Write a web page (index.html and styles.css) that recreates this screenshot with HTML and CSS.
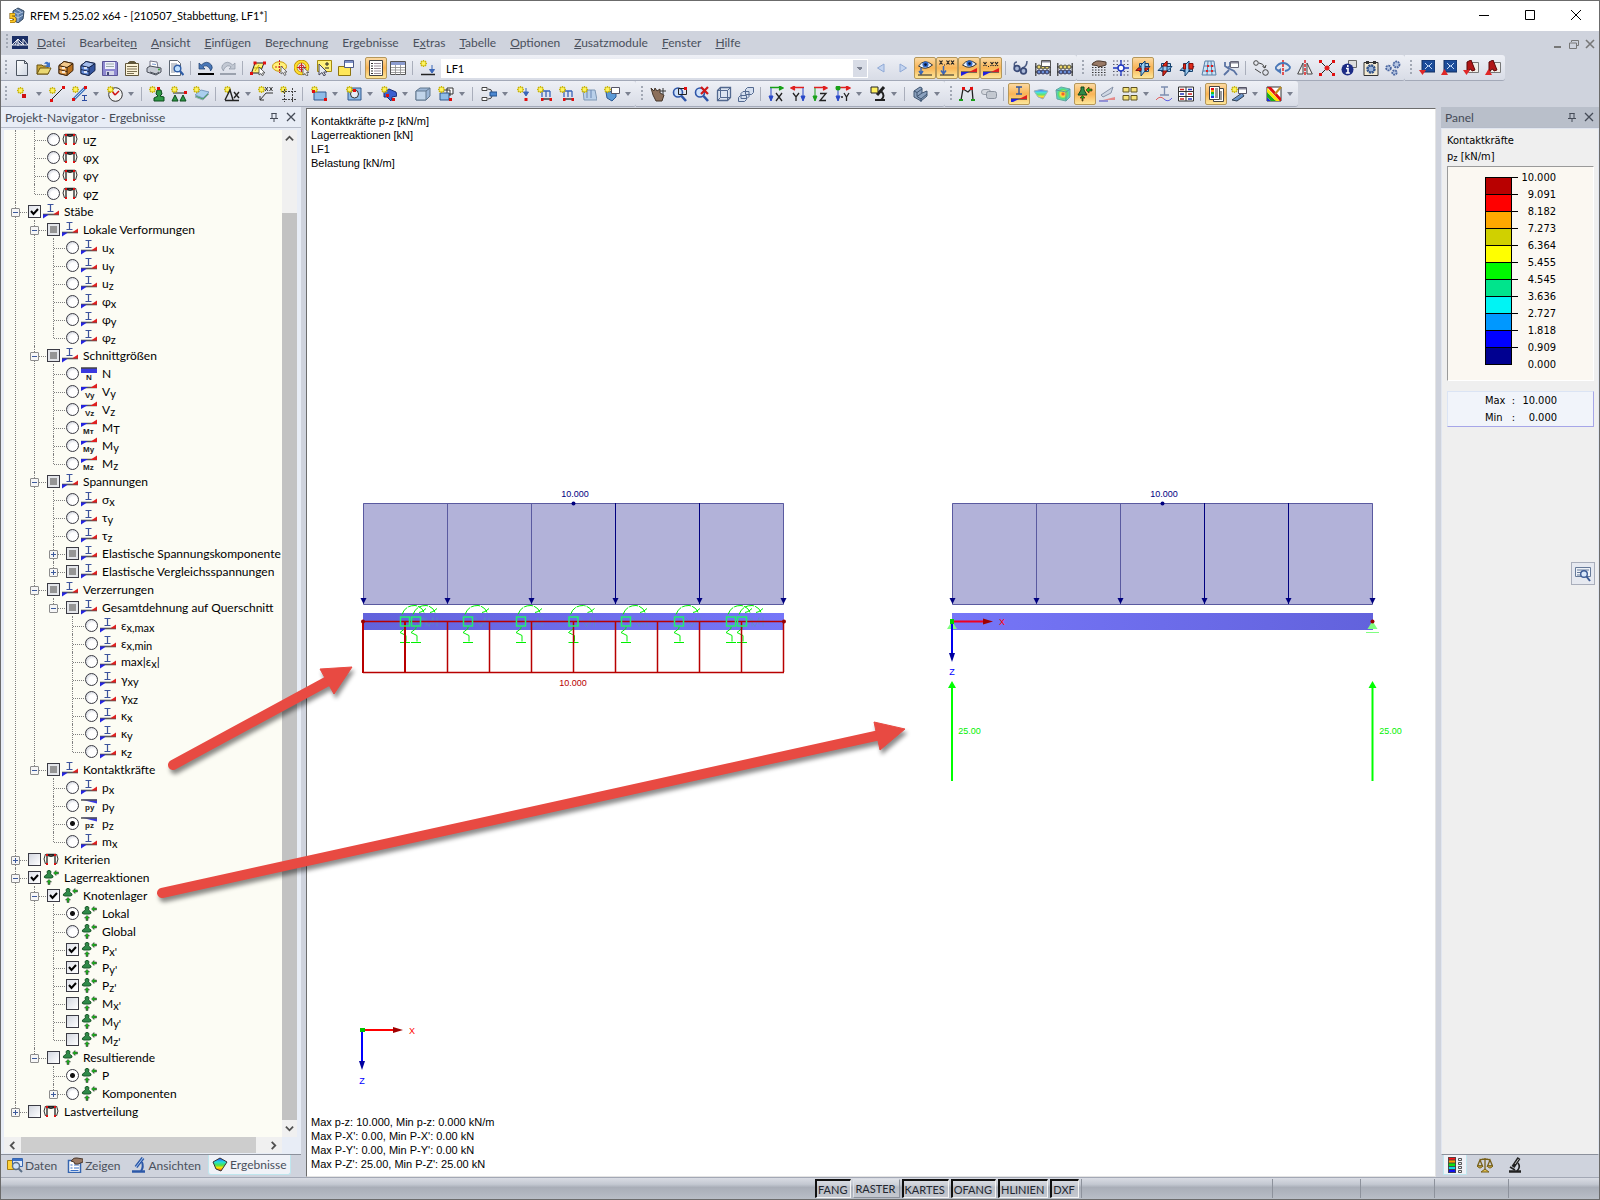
FILE: index.html
```html
<!DOCTYPE html>
<html lang="de">
<head>
    <meta charset="UTF-8">
    <meta name="viewport" content="width=device-width, initial-scale=1.0">
    <title>RFEM 5.25.02 x64 - [210507_Stabbettung, LF1*]</title>
    <link rel="stylesheet" href="styles.css">
</head>
<body>
    <!-- icon sprite -->
    <svg class="sprite" aria-hidden="true">
        <defs>
            <linearGradient id="g-blue" x1="0" y1="0" x2="1" y2="1"><stop offset="0" stop-color="#b5d4f4"/><stop offset="1" stop-color="#2d5fa8"/></linearGradient>
            <linearGradient id="g-paper" x1="0" y1="0" x2="1" y2="1"><stop offset="0" stop-color="#ffffff"/><stop offset="1" stop-color="#cfd6e2"/></linearGradient>
            <linearGradient id="g-rain" x1="0" y1="0" x2="0" y2="1"><stop offset="0" stop-color="#2a3cff"/><stop offset=".3" stop-color="#20e0e0"/><stop offset=".55" stop-color="#4be04b"/><stop offset=".75" stop-color="#ffe600"/><stop offset="1" stop-color="#f03010"/></linearGradient>
            <radialGradient id="g-cube"><stop offset="0" stop-color="#f03020"/><stop offset=".35" stop-color="#ffe040"/><stop offset=".65" stop-color="#58e070"/><stop offset="1" stop-color="#58c8e8"/></radialGradient>
            <linearGradient id="g-beam" x1="0" x2="1"><stop offset="0" stop-color="#7676f8"/><stop offset="1" stop-color="#6262dc"/></linearGradient>
            <linearGradient id="g-beam2" x1="0" x2="1"><stop offset="0" stop-color="#6262dc"/><stop offset="1" stop-color="#7676f8"/></linearGradient>
        </defs>
        <g id="star"><path d="M3.500 0v7M0 3.500h7M1 1l5 5M6 1l-5 5" stroke="#c9b400" stroke-width="1.400"/><circle cx="3.500" cy="3.500" r="1.900" fill="#fff45a"/></g>
        <g id="dot"><rect width="3" height="3" fill="#e01010"/></g>
        <g id="load"><path d="M1 1v6M5 1v6M9 1v6M1 1h8" stroke="#3a66b8" fill="none" stroke-width="1.300"/><path d="M0 9h11" stroke="#222" stroke-width="1.300"/><rect x="0" y="8" width="2.500" height="3" fill="#e01010"/><rect x="8.500" y="8" width="2.500" height="3" fill="#e01010"/></g>

        <symbol id="i-app" viewBox="0 0 16 16"><path d="M4 4l5-3 6 3-1 8-5 4-5-3z" fill="#5b7ba6" stroke="#33475f"/><path d="M5 5l4 2 5-2M9 7v8M7 2l5 3M6 9l3 2 5-3" stroke="#c4d6ec" fill="none" stroke-width=".8"/><path d="M6 7.500H2v3h2q2 0 2 2t-2 2H1" stroke="#7a5400" stroke-width="3" fill="none"/><path d="M6 7.500H2v3h2q2 0 2 2t-2 2H1" stroke="#ffc928" stroke-width="1.800" fill="none"/></symbol>
        <symbol id="i-bridge" viewBox="0 0 16 13"><path d="M0 0h16v13H0z" fill="#1b2f66"/><path d="M0 9h16M6 3v7M6 3L0 9M6 3L3 9M6 3l6 6M11 3v6M11 3l5 6M6 6.500l4 2.500" stroke="#fff" fill="none" stroke-width=".9"/></symbol>
        <symbol id="i-new" viewBox="0 0 16 16"><path d="M2.500.5h8l3 3v12h-11z" fill="url(#g-paper)" stroke="#4d5561"/><path d="M10.500.5v3h3" fill="none" stroke="#4d5561"/></symbol>
        <symbol id="i-open" viewBox="0 0 16 16"><path d="M1 14V5h5l1 1h5v8z" fill="#c9a63a" stroke="#6a5310"/><path d="M1 14l3-6h11l-3 6z" fill="#ead873" stroke="#6a5310"/><path d="M8 4q2-4 5-1l1-1v5H9l2-2q-1-2-3-1z" fill="#3f74c7"/></symbol>
        <symbol id="i-cab" viewBox="0 0 16 16"><path d="M1 5.500l5-4 9 2v7l-6 5-8-2z" fill="#b9711f" stroke="#40240a"/><path d="M1 5.500l8 2v8l-8-2z" fill="#eba95a" stroke="#40240a"/><path d="M9 7.500l6-4M1 9.500l8 2" stroke="#40240a"/><path d="M1 5.500l5-4 9 2-6 4z" fill="#f3c98c" stroke="#40240a"/><path d="M4 8h3M4 12h3" stroke="#fff" stroke-width="1.500"/></symbol>
        <symbol id="i-cabblue" viewBox="0 0 16 16"><path d="M1 5.500l5-4 9 2v7l-6 5-8-2z" fill="#34549e" stroke="#16264d"/><path d="M1 5.500l8 2v8l-8-2z" fill="#6a91dc" stroke="#16264d"/><path d="M9 7.500l6-4M1 9.500l8 2" stroke="#16264d"/><path d="M1 5.500l5-4 9 2-6 4z" fill="#a4bdec" stroke="#16264d"/><path d="M4 8h3M4 12h3" stroke="#fff" stroke-width="1.500"/></symbol>
        <symbol id="i-save" viewBox="0 0 16 16"><path d="M.5 1.500h14l1 1v13H.5z" fill="#8d88d0" stroke="#5a5596"/><path d="M3 2h10v7H3z" fill="#eef0fa"/><path d="M4 4h8M4 6.500h8" stroke="#9aa"/><path d="M4 11h8v4H4z" fill="#d4d6e8"/><path d="M5 12h2v3H5z" fill="#444b78"/></symbol>
        <symbol id="i-list" viewBox="0 0 16 16"><path d="M1.500 3.500h3l1-2h5l1 2h3v12h-13z" fill="#fbf3d9" stroke="#60563a"/><path d="M3 6.500h10M3 9h10M3 11.500h10M3 13.500h7" stroke="#7a6f50"/><path d="M4 3h8" stroke="#60563a" stroke-width="2"/></symbol>
        <symbol id="i-print" viewBox="0 0 16 16"><path d="M4 1l7 1 1 6-8-1z" fill="#fff" stroke="#778"/><path d="M1 8l3-2 11 2v4l-5 3-9-3z" fill="#c7cbd4" stroke="#4a4f5a"/><path d="M4 12l6 2 3-2" stroke="#4a4f5a" fill="none"/><path d="M6 4l4 .5" stroke="#7a9ad0"/><circle cx="13" cy="9.500" r="1" fill="#37a437"/></symbol>
        <symbol id="i-preview" viewBox="0 0 16 16"><path d="M1.500.5h8l3 3v12h-11z" fill="#fff" stroke="#5d6672"/><path d="M3 4h6M3 6h4M3 8h3M3 10h3M3 12h4" stroke="#8a93a0"/><circle cx="9.500" cy="8.500" r="3.300" fill="#bfe0ff" stroke="#2f5da6" stroke-width="1.400"/><path d="M12 11l3.500 4" stroke="#2f5da6" stroke-width="2.200"/></symbol>
        <symbol id="i-undo" viewBox="0 0 16 16"><path d="M1 3v6h6L4.800 6.800Q9 4 12 9q.5 1 .5 2 3-3 1-6Q9-.5 3.200 5z" fill="#4a78b8" stroke="#1d3c6b" stroke-width=".7"/><path d="M0 14h16" stroke="#000" stroke-width="2"/></symbol>
        <symbol id="i-redo" viewBox="0 0 16 16"><path d="M15 3v6H9l2.200-2.200Q7 4 4 9q-.5 1-.5 2-3-3-1-6Q7-.5 12.800 5z" fill="#c3c9d4" stroke="#8d95a3" stroke-width=".7"/><path d="M0 14h16" stroke="#9aa1ad" stroke-width="2"/></symbol>
        <symbol id="i-plane" viewBox="0 0 16 16"><path d="M5 3h9l-4 10H1.500z" fill="#fff27a" stroke="#222"/><path d="M4 8l8-.5M9 5L5 11" stroke="#c9b400"/><use href="#dot" x="3.500" y="1.500"/><use href="#dot" x="13" y="1.500"/><use href="#dot" x="0" y="12"/><path d="M9 7v8l2-1.500 1 2 1.500-.6-1-2H15z" fill="#fff" stroke="#444" stroke-width=".8"/></symbol>
        <symbol id="i-lasso" viewBox="0 0 16 16"><ellipse cx="7.500" cy="6.500" rx="7" ry="4.800" fill="#fff27a" stroke="#c9960a"/><path d="M7.500 0v13M3 7h9" stroke="#d02020" stroke-dasharray="2 1"/><path d="M9 6v8l2-1.500 1.500 3 1.500-.8-1.400-2.700H15z" fill="#eee" stroke="#555" stroke-width=".8"/></symbol>
        <symbol id="i-ring" viewBox="0 0 16 16"><circle cx="7.500" cy="7.500" r="6" fill="none" stroke="#b98b00" stroke-width="3.600"/><circle cx="7.500" cy="7.500" r="6" fill="none" stroke="#ffdf30" stroke-width="2.200"/><circle cx="7.500" cy="7.500" r="2.500" fill="none" stroke="#d02020"/><path d="M7.500 3v9M3 7.500h9" stroke="#d02020"/><path d="M9 7v8l2-1.500 1.500 2.500 1.500-.8-1.400-2.700H15z" fill="#eee" stroke="#555" stroke-width=".8"/></symbol>
        <symbol id="i-selpm" viewBox="0 0 16 16"><path d="M1.500.5h14v11h-14z" fill="#fff27a" stroke="#a58a10"/><path d="M9 4h4M11 2v4M9 8h4" stroke="#222"/><path d="M3 4v11l3-2.500 2 3.500 1.500-1-1.800-3H11z" fill="#e6ebf2" stroke="#445"/></symbol>
        <symbol id="i-group" viewBox="0 0 16 16"><path d="M.5 6.500h12v9H.5z" fill="#ffe75a" stroke="#8e7510"/><path d="M6.500.5h9v7h-9z" fill="#fff" stroke="#4e5b88"/><path d="M7 1h8v2H7z" fill="#7f92c8"/></symbol>
        <symbol id="i-sheet" viewBox="0 0 16 16"><path d="M1.500.5h13v15h-13z" fill="#fff" stroke="#444"/><path d="M3 3.500h2M3 6h2M3 8.500h2M3 11h2M3 13.500h2" stroke="#333"/><path d="M6 3.500h7M6 6h7M6 8.500h7M6 11h7M6 13.500h7" stroke="#9a8f9a"/></symbol>
        <symbol id="i-table" viewBox="0 0 16 16"><path d="M.5 1.500h15v13H.5z" fill="#fff" stroke="#555"/><path d="M1 2h14v3H1z" fill="#8c9ccf"/><path d="M1 7.500h14M1 10h14M1 12.500h14M5.500 5v10M10.500 5v10" stroke="#888" stroke-width=".8"/></symbol>
        <symbol id="i-newlf" viewBox="0 0 16 16"><use href="#star"/><path d="M12 5v7M9.500 9.500L12 13l2.500-3.500z" stroke="#3a66b8" fill="#3a66b8"/><path d="M1 14.500h14" stroke="#222" stroke-width="1.500"/></symbol>
        <symbol id="i-prev" viewBox="0 0 16 16"><path d="M11 4v8L4.500 8z" fill="#c5d5f0" stroke="#8fa9d6"/></symbol>
        <symbol id="i-next" viewBox="0 0 16 16"><path d="M5 4v8l6.500-4z" fill="#c5d5f0" stroke="#8fa9d6"/></symbol>
        <g id="eye"><path d="M0 5Q6-3 14 4 7 10 0 5z" fill="#e9f2ff" stroke="#333"/><circle cx="7" cy="3.600" r="3" fill="#2f66c8"/><circle cx="7" cy="3.600" r="1.300" fill="#0b1530"/></g>
        <g id="xxx"><path d="M0 0l3 4M3 0L0 4M4.500 4.500h1M7 0l3 4M10 0L7 4M11.500 0l3 4M14.500 0l-3 4" stroke="#222" fill="none" stroke-width="1.200"/></g>
        <symbol id="i-eyeload" viewBox="0 0 16 16"><use href="#eye" x="1.500" y="1"/><path d="M4 8v6M2 11l2 3 2-3" stroke="#3a66b8" stroke-width="1.500" fill="none"/><path d="M1 15h14" stroke="#222"/></symbol>
        <symbol id="i-xxload" viewBox="0 0 16 16"><use href="#xxx" x=".5" y=".5"/><path d="M4.500 6v8M2 10.500L4.500 14 7 10.500" stroke="#3a66b8" stroke-width="1.500" fill="none"/><path d="M1 15h14" stroke="#222"/></symbol>
        <g id="wedge"><path d="M0 3h16" stroke="#444" stroke-width="1.400"/><path d="M0 3h8L0 7z" fill="#2020e0"/><path d="M16 3H8l8-4z" fill="#e02020"/></g>
        <symbol id="i-eyeres" viewBox="0 0 16 16"><use href="#eye" x="1.500" y="0"/><use href="#wedge" y="9"/></symbol>
        <symbol id="i-xxres" viewBox="0 0 16 16"><use href="#xxx" x=".5" y="2"/><use href="#wedge" y="9"/></symbol>
        <symbol id="i-glasses" viewBox="0 0 16 16"><path d="M2 8Q0 2 4 2M9 8q5-1 5-7" fill="none" stroke="#4a5a82" stroke-width="1.500"/><circle cx="4" cy="8.500" r="2.800" fill="#a9b8d8" stroke="#3c4c78" stroke-width="1.800"/><circle cx="10.500" cy="11" r="2.800" fill="#a9b8d8" stroke="#3c4c78" stroke-width="1.800"/></symbol>
        <symbol id="i-abacus" viewBox="0 0 16 16"><path d="M.8 3v13M15.200 3v13M0 7h16M0 12h16" stroke="#333" stroke-width="1.200"/><circle cx="4" cy="7" r="2" fill="#e9d36a" stroke="#554"/><circle cx="8" cy="7" r="2" fill="#e9d36a" stroke="#554"/><circle cx="12" cy="7" r="2" fill="#e9d36a" stroke="#554"/><circle cx="4" cy="12" r="2" fill="#6b8fd8" stroke="#335"/><circle cx="8" cy="12" r="2" fill="#6b8fd8" stroke="#335"/><circle cx="12" cy="12" r="2" fill="#6b8fd8" stroke="#335"/></symbol>
        <symbol id="i-abacus2" viewBox="0 0 16 16"><use href="#i-abacus"/><path d="M6.500.5h9v6h-9z" fill="#fff" stroke="#555"/><path d="M7 1h8v1.500H7z" fill="#889"/></symbol>
        <symbol id="i-gridhand" viewBox="0 0 16 16"><path d="M1 7.500h15M1 10h15M1 12.500h15M1 15h15" stroke="#333" stroke-dasharray="1.500 1.500"/><path d="M2 3Q6 0 9 1l6 1v3l-5 1.500q-3 1-4-1L1 5z" fill="#9a7a66" stroke="#4a382c"/></symbol>
        <symbol id="i-gridsnap" viewBox="0 0 16 16"><path d="M0 1h16M0 4.500h16M0 11.500h16M0 15h16" stroke="#556" stroke-dasharray="1.500 2"/><circle cx="8" cy="8" r="3" fill="#fff" stroke="#2038c0" stroke-width="1.500"/><path d="M8 0v5M8 11v5M0 8h5M11 8h5" stroke="#2038c0" stroke-width="1.300"/></symbol>
        <g id="planes"><path d="M4.500 3.500h9v8h-9z" fill="#a8d2f4" stroke="#14406e"/><path d="M1 10.500l4-4h10l-4 4z" fill="#7ab4e6" stroke="#14406e"/><path d="M6 5l4-4v10l-4 5z" fill="#9accf2" stroke="#14406e"/></g>
        <symbol id="i-wp1" viewBox="0 0 16 16"><use href="#planes"/><path d="M1 10.500l2.500-2.500H6v2.500zM10 8h4l-2.500 2.500H10z" fill="#e02a1a" stroke="#8b0f08"/></symbol>
        <symbol id="i-wp2" viewBox="0 0 16 16"><use href="#planes"/><path d="M6 5l4-4v5H6zM6 11h4l-4 5z" fill="#e02a1a" stroke="#8b0f08"/></symbol>
        <symbol id="i-wp3" viewBox="0 0 16 16"><use href="#planes"/><path d="M10 3.500h4V9h-4zM4.500 4h2v5h-2z" fill="#e02a1a" stroke="#8b0f08"/></symbol>
        <symbol id="i-mesh" viewBox="0 0 16 16"><path d="M4 1h9l2 14H1z" fill="#cfe4f5" stroke="#5980a8"/><path d="M3 6h11M2 11h12M7 1L6 15M10 1l1 14" stroke="#5980a8"/><path d="M6 5h2v2H6zM10 5h2v2h-2zM5 10h2v2H5zM10 10h2v2h-2z" fill="#e02020"/></symbol>
        <symbol id="i-wrench" viewBox="0 0 16 16"><path d="M1 15l5-5M2 2v4l3 2 2-2V2M5 8l6 3 3 4" stroke="#5a73a3" stroke-width="1.800" fill="none"/><path d="M7.500 1.500h8v6h-8z" fill="#fff" stroke="#667"/><path d="M8 2h7v1.500H8z" fill="#889"/></symbol>
        <symbol id="i-move" viewBox="0 0 16 16"><circle cx="3" cy="3" r="2.300" fill="none" stroke="#444"/><circle cx="12.500" cy="12.500" r="2.800" fill="none" stroke="#444"/><path d="M6 3q4 0 6 5M9.500 6.500L12 8l1-3M2 9l6 4" stroke="#444" fill="none"/></symbol>
        <symbol id="i-rotate" viewBox="0 0 16 16"><path d="M8 0v16" stroke="#e02020" stroke-width="1.500" stroke-dasharray="3 1"/><path d="M5 11Q0 10 1 7q3-4 7-4t7 4q0 3-5 4" fill="none" stroke="#4a78b8" stroke-width="1.800"/><path d="M6 8v6l-4-3z" fill="#4a78b8"/></symbol>
        <symbol id="i-mirror" viewBox="0 0 16 16"><path d="M8 0v16" stroke="#e02020" stroke-width="1.500" stroke-dasharray="3 1"/><path d="M6 3v11H.7zM10 3v11h5.300z" fill="#eee" stroke="#444"/></symbol>
        <symbol id="i-cross" viewBox="0 0 16 16"><path d="M2 2l12 12M14 2L2 14" stroke="#222"/><circle cx="8" cy="8" r="2.500" fill="#e02020"/><use href="#dot" x="0" y="0"/><use href="#dot" x="13" y="0"/><use href="#dot" x="0" y="13"/><use href="#dot" x="13" y="13"/></symbol>
        <symbol id="i-info" viewBox="0 0 16 16"><path d="M7.500.5h8v7h-8z" fill="#ddd" stroke="#666"/><circle cx="6.500" cy="9.500" r="6" fill="#1c2c86"/><path d="M6.800 5v2M5 8.500h2v4M4.800 13h4" stroke="#fff" stroke-width="1.600" fill="none"/></symbol>
        <symbol id="i-calc" viewBox="0 0 16 16"><path d="M1 2.500h14v13H1z" fill="#f3ead2" stroke="#333"/><path d="M3 2.500h3M10 2.500h3" stroke="#333" stroke-width="3"/><circle cx="8" cy="9" r="3.500" fill="none" stroke="#33558c" stroke-width="2.500" stroke-dasharray="2 .7"/><circle cx="8" cy="9" r="3" fill="#9bb4da" stroke="#33558c"/></symbol>
        <symbol id="i-gears" viewBox="0 0 16 16"><g fill="#b8c8e4" stroke="#4a66a0" stroke-width="1.800" stroke-dasharray="1.800 .7"><circle cx="3.500" cy="8" r="2.400"/><circle cx="11.500" cy="4.500" r="3"/><circle cx="9.500" cy="12.500" r="2.200"/></g></symbol>
        <g id="mod"><path d="M3 0h13v12H3z" fill="#1b4c9a" stroke="#122f60"/><path d="M6 3l3 3-3 3M13 3l-3 3 3 3M8 6h3" stroke="#d5e8ff" fill="none" stroke-width=".9"/></g>
        <symbol id="i-mod1" viewBox="0 0 16 16"><use href="#mod"/><path d="M0 10h7l-3.500 5z" fill="#e02828"/></symbol>
        <symbol id="i-mod2" viewBox="0 0 16 16"><use href="#mod"/><path d="M0 15h7l-3.500-6z" fill="#e02828"/></symbol>
        <g id="acad"><path d="M5.500 2.500h10v10h-10z" fill="#f1eee8" stroke="#777"/><path d="M4 12V2l4-2 4 10-3 1-1-2-2 1z" fill="#b01616" stroke="#5b0808"/></g>
        <symbol id="i-acad1" viewBox="0 0 16 16"><use href="#acad"/><path d="M0 10h7l-3.500 5z" fill="#e02828"/></symbol>
        <symbol id="i-acad2" viewBox="0 0 16 16"><use href="#acad"/><path d="M0 15h7l-3.500-6z" fill="#e02828"/></symbol>

        <symbol id="i-node" viewBox="0 0 16 16"><use href="#star" x="2" y="1"/><path d="M7 8h4v4H7z" fill="#d01010"/></symbol>
        <symbol id="i-line" viewBox="0 0 16 16"><path d="M2 14L14 2" stroke="#222"/><use href="#star" y="1"/><use href="#dot" x="13" y="0"/><use href="#dot" x="1" y="13"/></symbol>
        <symbol id="i-member" viewBox="0 0 16 16"><path d="M2 13L13 2" stroke="#3d72bb" stroke-width="3"/><path d="M2 13L13 2" stroke="#b5d4f4"/><use href="#star"/><use href="#dot" x="12" y="0"/><use href="#dot" x="0" y="12"/><path d="M10 9.500h5M12.500 9.500v5M10 14.500h5" stroke="#2a4aa0"/></symbol>
        <symbol id="i-clock" viewBox="0 0 16 16"><circle cx="8.500" cy="8.500" r="6.800" fill="#f2f2f2" stroke="#333"/><path d="M8 9l4-4M8 9L5 5" stroke="#d01010" stroke-width="1.500"/><use href="#star"/></symbol>
        <symbol id="i-supp" viewBox="0 0 16 16"><path d="M8 4h4l1 4-2 2 4 1v4H5v-3l4-2-2-2z" fill="#2f9a45" stroke="#0d4a1c"/><use href="#star"/><use href="#dot" x="8" y="1"/></symbol>
        <symbol id="i-lsupp" viewBox="0 0 16 16"><path d="M2 7h13" stroke="#222"/><path d="M4 9l3 6H1zM12 9l3 6H9z" fill="#2f9a45" stroke="#0d4a1c"/><use href="#star"/><use href="#dot" x="13" y="5"/></symbol>
        <symbol id="i-ssupp" viewBox="0 0 16 16"><path d="M2 11l6-5 8 2-6 6z" fill="#4aa860" stroke="#9ab"/><path d="M2 9l6-5 8 2-6 6z" fill="#a9cfee" stroke="#7a9cc0"/><use href="#star"/></symbol>
        <symbol id="i-dim" viewBox="0 0 16 16"><use href="#star"/><path d="M1 14L6 4l3 10M1 14.500h14M10 6l5 6M15 6l-5 6" stroke="#222" stroke-width="1.400" fill="none"/></symbol>
        <symbol id="i-comment" viewBox="0 0 16 16"><use href="#star"/><path d="M7 1l3 4M10 1L7 5M11.500 1l3 4M14.500 1l-3 4M15 7H8l-6 7M2 10v4h4" stroke="#333" fill="none"/></symbol>
        <symbol id="i-guide" viewBox="0 0 16 16"><use href="#star"/><path d="M4.500 3v13M12.500 2v14M2 5.500h14M2 13.500h14" stroke="#444" stroke-dasharray="2 1"/></symbol>
        <symbol id="i-surf" viewBox="0 0 16 16"><path d="M3 6h12v8H3z" fill="#8fbce8" stroke="#33588c"/><use href="#star"/><use href="#dot" x="1" y="4"/><use href="#dot" x="13" y="12"/></symbol>
        <symbol id="i-hole" viewBox="0 0 16 16"><path d="M2 2h13v12H2z" fill="#8fbce8" stroke="#33588c"/><circle cx="8.500" cy="8" r="4" fill="#e9edf5" stroke="#333"/><use href="#star"/><use href="#dot" x="7" y="3"/></symbol>
        <symbol id="i-solid" viewBox="0 0 16 16"><path d="M3 6l5-3 7 3 1 4-5 1-1 4-4-4H3z" fill="#3b5fd0" stroke="#182e78"/><use href="#star"/><use href="#dot" x="5" y="8"/><use href="#dot" x="11" y="12"/></symbol>
        <symbol id="i-box" viewBox="0 0 16 16"><path d="M1 5l4-3h10v8l-4 4H1z" fill="#9cb6d6" stroke="#62788f"/><path d="M1 5h10v9H1z" fill="#c2d5ea" stroke="#62788f"/><path d="M11 5l4-3" stroke="#62788f"/></symbol>
        <symbol id="i-copybox" viewBox="0 0 16 16"><path d="M9 2h6v6H9z" fill="#fff" stroke="#333"/><path d="M2 7h9v7H2z" fill="#8fbce8" stroke="#33588c"/><path d="M6 4h6v6" fill="none" stroke="#333"/><use href="#star"/><use href="#dot" x="11" y="12"/></symbol>
        <symbol id="i-combo" viewBox="0 0 16 16"><path d="M1 1.500h5v3H1zM1 11.500h5v3H1z" fill="#fff" stroke="#444"/><path d="M7 3q4 0 4 3M7 13q4 0 4-3" fill="none" stroke="#444"/><path d="M9 6h7v4H9z" fill="#4c88d0" stroke="#23508c"/></symbol>
        <symbol id="i-nload" viewBox="0 0 16 16"><use href="#star" x="2"/><path d="M11 2v7M8.500 6l2.500 4 2.500-4z" stroke="#3a66b8" fill="#3a66b8"/><use href="#dot" x="9.500" y="12"/></symbol>
        <symbol id="i-mload" viewBox="0 0 16 16"><use href="#load" x="4" y="4"/><use href="#star"/></symbol>
        <symbol id="i-sload" viewBox="0 0 16 16"><path d="M2 4h12l2 10H3z" fill="#b9d0ea" stroke="#7f98b5"/><path d="M6 4v8M10 4v8" stroke="#6b87b3"/><use href="#star"/></symbol>
        <symbol id="i-gload" viewBox="0 0 16 16"><path d="M2 6l10-1v6l-4 4-5-3z" fill="#5c9ad6" stroke="#2d5a94"/><path d="M7.500 1.500h8v6h-8z" fill="#fff" stroke="#556"/><use href="#star"/></symbol>
        <symbol id="i-hand" viewBox="0 0 16 16"><path d="M1 2l3 3 1-3 2 3 3-2v4l4 2-2 6H6L3 9z" fill="#8c6f5a" stroke="#44362b"/><path d="M10 5h6M13 2v6" stroke="#333"/></symbol>
        <symbol id="i-zoomwin" viewBox="0 0 16 16"><circle cx="6" cy="6.500" r="4.500" fill="#cfe2fa" stroke="#2e55a8" stroke-width="1.600"/><path d="M9.500 10l4.500 5" stroke="#2e55a8" stroke-width="2.600"/><path d="M6.500 2.500h8v6h-8z" fill="none" stroke="#222"/><use href="#dot" x="12" y="1"/></symbol>
        <symbol id="i-zoomx" viewBox="0 0 16 16"><circle cx="6" cy="6.500" r="4.500" fill="#cfe2fa" stroke="#2e55a8" stroke-width="1.600"/><path d="M9.500 10l4.500 5" stroke="#2e55a8" stroke-width="2.600"/><path d="M7 1l7 7M14 1L7 8" stroke="#d01818" stroke-width="2.200"/></symbol>
        <symbol id="i-cube" viewBox="0 0 16 16"><path d="M1.500 4.500l3-3h10v10l-3 3h-10z" fill="#dce4f1" stroke="#53698f" stroke-width="1.300"/><path d="M1.500 4.500h10v10M11.500 4.500l3-3M4.500 1.500v10h10M4.500 11.500l-3 3" stroke="#53698f" fill="none"/></symbol>
        <symbol id="i-cubes" viewBox="0 0 16 16"><path d="M9.500 1.500h6v5l-2 2h-6v-5zM5 5.500h6v5l-2 2H3v-5zM2.500 9.500h6v4l-2 2h-6v-4z" fill="#d5dfef" stroke="#53698f"/></symbol>
        <symbol id="i-vx" viewBox="0 0 16 16"><path d="M2 1.500h10M11 0l4 2-4 2" stroke="#18a018" fill="#18a018" stroke-width="1.500"/><path d="M3 2v10M1 10l2 5 2-5z" stroke="#2848c8" fill="#2848c8"/><path d="M8 7l6 8M14 7l-6 8" stroke="#222" stroke-width="1.300"/></symbol>
        <symbol id="i-vy" viewBox="0 0 16 16"><path d="M14 1.500H3M5 0L1 2l4 2" stroke="#e02020" fill="#e02020" stroke-width="1.500"/><path d="M13 2v10M11 10l2 5 2-5z" stroke="#2848c8" fill="#2848c8"/><path d="M3 7l3 4 3-4M6 11v4" stroke="#222" stroke-width="1.300" fill="none"/></symbol>
        <symbol id="i-vz" viewBox="0 0 16 16"><path d="M2 1.500h10M11 0l4 2-4 2" stroke="#e02020" fill="#e02020" stroke-width="1.500"/><path d="M3 2v10M1 10l2 5 2-5z" stroke="#18a018" fill="#18a018"/><path d="M8 7.500h6l-6 7h6" stroke="#222" stroke-width="1.300" fill="none"/></symbol>
        <symbol id="i-vmy" viewBox="0 0 16 16"><path d="M2 1.500h10M11 0l4 2-4 2" stroke="#e02020" fill="#e02020" stroke-width="1.500"/><path d="M3 2v10M1 10l2 5 2-5z" stroke="#2848c8" fill="#2848c8"/><circle cx="3" cy="2" r="2.500" fill="#18a018"/><path d="M6 11h2M9 7l2.500 4L14 7M11.500 11v4" stroke="#222" stroke-width="1.300" fill="none"/></symbol>
        <symbol id="i-micro" viewBox="0 0 16 16"><path d="M14 1L7 9" stroke="#222" stroke-width="3"/><path d="M5 14h10M11 5q5 5 0 9" stroke="#222" stroke-width="2" fill="none"/><path d="M1 1h7v6H1z" fill="#fff060" stroke="#222"/></symbol>
        <symbol id="i-profile" viewBox="0 0 16 16"><path d="M1 5l6-4 2 1v5l5-2v5l-6 5-7-4z" fill="#8aa0bd" stroke="#3f5470"/><path d="M1 5l3 1.500v4l4 2.500v3M4 6.500L9 3M4 10.500l5-3.500M8 13l6-5" stroke="#3f5470" fill="none"/></symbol>
        <symbol id="i-frame" viewBox="0 0 16 16"><path d="M2 14L4 3l5 3 4-4 1 12" fill="none" stroke="#222" stroke-width="1.300"/><path d="M3 1h3v3H3zM11 1h3v3h-3z" fill="#e01010"/><path d="M0 13h4v2H0zM12 13h4v2h-4z" fill="#18a018"/></symbol>
        <symbol id="i-tube" viewBox="0 0 16 16"><rect x=".5" y="3.500" width="9" height="5" rx="2.500" fill="#d6d9df" stroke="#999fa9"/><rect x="5.500" y="5.500" width="10" height="7" rx="2" fill="#c3c8d0" stroke="#8b929e"/></symbol>
        <symbol id="i-rmember" viewBox="0 0 16 16"><path d="M5 1h6M8 1v7M5 8h6" stroke="#33569e" stroke-width="1.400"/><use href="#wedge" y="10"/></symbol>
        <symbol id="i-rsurf" viewBox="0 0 16 16"><path d="M1 5q7-3 14 0l-5 8-5-2z" fill="url(#g-rain)" stroke="#8aa" opacity=".8"/></symbol>
        <symbol id="i-rsolid" viewBox="0 0 16 16"><path d="M1 4l5-3 9 2v8l-4 4-9-2z" fill="url(#g-cube)" stroke="#6a9"/><path d="M1 4l10 2v9M11 6l4-3" stroke="#5a9a9a" fill="none"/></symbol>
        <symbol id="i-rsupp" viewBox="0 0 16 16"><path d="M4 1h3v3l3 5H1l3-5z" fill="#2f8a48" stroke="#12461f"/><path d="M15 3h-3V1L9 4l3 3V5h3zM6 15v-3h2L5.500 9.500 3 12h2v3z" fill="#14b414" stroke="#5a2010" stroke-width=".7"/></symbol>
        <symbol id="i-section" viewBox="0 0 16 16"><path d="M2 9L14 1l-2 6-8 4z" fill="#d0d8e4" stroke="#8793a8"/><path d="M0 15l16-4v3l-8 0z" fill="#e58a8a"/><path d="M0 15h9" stroke="#7a7ad0" stroke-width="1.500"/></symbol>
        <symbol id="i-windows" viewBox="0 0 16 16"><path d="M1 1.500h6v4.500H1zM9 1.500h6v4.500H9zM1 9.500h6v4.500H1zM9 9.500h6v4.500H9z" fill="#f5e27a" stroke="#5f5320"/></symbol>
        <symbol id="i-wave" viewBox="0 0 16 16"><path d="M5 1h7M8.500 1v8M4 9h9" stroke="#7c8db0" stroke-width="1.300"/><path d="M0 14q4-5 8-1" stroke="#e06060" fill="none"/><path d="M8 13q4 4 8-1" stroke="#6060e0" fill="none"/></symbol>
        <symbol id="i-values" viewBox="0 0 16 16"><path d="M.5 1h15v14H.5z" fill="#fff" stroke="#333"/><path d="M0 5.500h16M0 10.500h16M8 1v14" stroke="#333"/><path d="M2 3.500h4M10 8h4M2 13h4" stroke="#d02020" stroke-width="1.500"/><path d="M10 3.500h4M2 8h4M10 13h4" stroke="#2030c0" stroke-width="1.500"/></symbol>
        <symbol id="i-panel" viewBox="0 0 16 16"><path d="M5.500 2.500h10v13h-10z" fill="#fff" stroke="#444"/><path d="M1.500.5h10v13h-10z" fill="#fff" stroke="#444"/><path d="M3 2h3v2H3z" fill="#e01010"/><path d="M3 4h3v2H3z" fill="#ffb000"/><path d="M3 6h3v2H3z" fill="#20c020"/><path d="M3 8h3v2H3z" fill="#20d0e0"/><path d="M3 10h3v2H3z" fill="#2030e0"/><path d="M7 3h3M7 5h3M7 7h3M7 9h3M7 11h3M13 5v9" stroke="#333"/></symbol>
        <symbol id="i-newsec" viewBox="0 0 16 16"><path d="M1 14l10-7 2 3-7 5z" fill="url(#g-blue)" stroke="#345"/><path d="M7.500 1.500h8v6h-8z" fill="#fff" stroke="#556"/><path d="M8 2h7v1.500H8z" fill="#889"/><use href="#star"/></symbol>
        <symbol id="i-colors" viewBox="0 0 16 16"><path d="M1 1h14v14H1z" fill="#fff" stroke="#333"/><path d="M1 11v4h4z" fill="#2030e0"/><path d="M1 6v5l4 4h5z" fill="#18b018"/><path d="M1 2v4l9 9h4z" fill="#ffe600"/><path d="M1 1h4l10 11v3h-1z" fill="#e01010"/><path d="M15 1L9 8" stroke="#c09020" stroke-width="2"/></symbol>

        <!-- tree -->
        <symbol id="t-mem" viewBox="0 0 16 16"><path d="M4.500 1.500h6M7.500 2v6M4.500 8.500h6" stroke="#3c539c" stroke-width="1.200"/><path d="M0 11.500h16" stroke="#555" stroke-width="1.600"/><path d="M0 11.500h6L0 15.500z" fill="#2424e0"/><path d="M16 11.500h-6l6-4z" fill="#e02020"/></symbol>
        <symbol id="t-frame" viewBox="0 0 16 16"><path d="M4 13V4q4 2.500 8 0v9M3 3.500h10" stroke="#222" fill="none" stroke-width="1.300"/><path d="M2.500 3Q-.500 8 2.500 13M13.500 3q3 5 0 10" fill="none" stroke="#333"/><path d="M3 3h2v2H3zM11 3h2v2h-2zM3 12h2v2H3zM11 12h2v2h-2z" fill="#e01010"/></symbol>
        <symbol id="t-n" viewBox="0 0 16 16"><path d="M0 3h16v5H0z" fill="#3a3ae0"/><path d="M0 3h16" stroke="#444" stroke-width="1.500"/></symbol>
        <symbol id="t-v" viewBox="0 0 16 16"><path d="M0 4.500h16" stroke="#555" stroke-width="1.500"/><path d="M0 4h7L0 8z" fill="#2424e0"/><path d="M16 5H9l7-4.500z" fill="#e02020"/></symbol>
        <symbol id="t-p" viewBox="0 0 16 16"><path d="M0 2.500h16v4z" fill="#3a3ae0"/><path d="M0 3h16" stroke="#555" stroke-width="1.500"/></symbol>
        <symbol id="t-sup" viewBox="0 0 16 16"><path d="M4 2.500Q6 0 8 2.500L7.500 5l2.500 2q.5 2-2 2H3Q.5 9 1.500 7L4.500 5z" fill="#2f8a48" stroke="#1d5a2c"/><path d="M15.500 3h-2.500V1.500L10.500 4l2.500 2.500V5h2.500zM5 15.500V13H3.500L6 10.500 8.500 13H7v2.500z" fill="#14b414" stroke="#444" stroke-width=".6"/></symbol>

        <!-- tabs -->
        <symbol id="n-data" viewBox="0 0 16 16"><path d="M.5 3.500h6l1 2v7h-7z" fill="#ffd23a" stroke="#a57d10"/><path d="M5.500 1.500h10v8h-10z" fill="#dfe9f8" stroke="#3565b0"/><path d="M6 2h9v2H6z" fill="#3a70c8"/><circle cx="9" cy="9" r="3.500" fill="#cfe2fa" stroke="#5c7088" stroke-width="1.400"/><path d="M11.500 11.500L15 15" stroke="#5c7088" stroke-width="2"/></symbol>
        <symbol id="n-show" viewBox="0 0 16 16"><path d="M1.500 3.500h12v12h-12z" fill="#fff" stroke="#3565b0" stroke-width="1.500"/><path d="M3.500 8h2M3.500 11h2M7 8h5M7 11h5M3.500 13.500h8" stroke="#3a70c8"/><path d="M4 4q3-4 6-3l6 1v3l-5 2q-4 1-4-2z" fill="#9a7a66" stroke="#4a382c"/></symbol>
        <symbol id="n-view" viewBox="0 0 16 16"><path d="M1 14.500h13" stroke="#2c58a8" stroke-width="2.500"/><path d="M12 1L5 10" stroke="#2c58a8" stroke-width="3.500"/><path d="M12 1l-7 9" stroke="#a9c7f0"/><path d="M11 5q2 5-1 9" stroke="#2c58a8" stroke-width="2" fill="none"/></symbol>
        <symbol id="n-res" viewBox="0 0 16 16"><path d="M1 5l7-4 7 4-6 9-5-2z" fill="url(#g-rain)" stroke="#333"/></symbol>
        <symbol id="n-legend" viewBox="0 0 16 16"><path d="M1 0h8v3H1z" fill="#ff1010"/><path d="M1 3h8v3H1z" fill="#ff9a00"/><path d="M1 6h8v3H1z" fill="#10e010"/><path d="M1 9h8v3H1z" fill="#10d8e8"/><path d="M1 12h8v4H1z" fill="#1010f0"/><path d="M1.500.5h7v15h-7zM1 3h8M1 6h8M1 9.500h8M1 12.500h8M11.500 1.500h3v2h-3zM11.500 5.500h3v2h-3zM11.500 9.500h3v2h-3zM11.500 13.500h3v2h-3z" fill="none" stroke="#444" stroke-width=".9"/></symbol>
        <symbol id="n-scale" viewBox="0 0 16 16"><path d="M8 1v12M3 3q5-2 10 0M3 3l-2.500 6h5zM13 3l-2.500 6h5z" fill="none" stroke="#77601a" stroke-width="1.300"/><path d="M0 9h6q-3 4-6 0zM10 9h6q-3 4-6 0zM4 15l4-3 4 3z" fill="#e3c04c" stroke="#77601a"/></symbol>
        <symbol id="n-micro" viewBox="0 0 16 16"><path d="M2 14.500h12" stroke="#222" stroke-width="2.500"/><path d="M12 1L6 10" stroke="#222" stroke-width="3.500"/><path d="M11 6q3 4-1 8M3 10l5 3" stroke="#222" stroke-width="1.600" fill="none"/><path d="M11.500 2L8 7" stroke="#bbb"/></symbol>
        <symbol id="n-find" viewBox="0 0 16 16"><path d="M.5 1.500h15v9H.5z" fill="#eef2f8" stroke="#667a99"/><path d="M2 4h12M2 6.500h8M2 9h5" stroke="#667a99"/><circle cx="9" cy="8" r="3.300" fill="#dbe9fb" stroke="#3d5c96" stroke-width="1.400"/><path d="M11.500 10.500L15 15" stroke="#3d5c96" stroke-width="2"/></symbol>
        <symbol id="n-pin" viewBox="0 0 10 10"><path d="M2.500 1.500h5M3 1v5M7 1v5M1 6.500h8M5 6.500V10" stroke="currentColor" fill="none"/></symbol>
        <symbol id="n-x" viewBox="0 0 10 10"><path d="M1 1l8 8M9 1L1 9" stroke="currentColor" stroke-width="1.300" fill="none"/></symbol>
    </svg>

    <div class="app">
        <header class="titlebar">
            <svg class="ic"><use href="#i-app"/></svg>
            <h1>RFEM 5.25.02 x64 - [210507_Stabbettung, LF1*]</h1>
            <div class="window-buttons">
                <button aria-label="Minimieren"><svg viewBox="0 0 10 10"><path d="M0 5.500h10" stroke="#000"/></svg></button>
                <button aria-label="Maximieren"><svg viewBox="0 0 10 10"><path d="M.5.500h9v9h-9z" fill="none" stroke="#000"/></svg></button>
                <button aria-label="Schließen"><svg viewBox="0 0 10 10"><path d="M0 0l10 10M10 0L0 10" stroke="#000"/></svg></button>
            </div>
        </header>

        <nav class="menubar">
            <span class="grip"></span>
            <svg class="ic bridge"><use href="#i-bridge"/></svg>
            <a href="#"><u>D</u>atei</a>
            <a href="#">Bearbeite<u>n</u></a>
            <a href="#"><u>A</u>nsicht</a>
            <a href="#"><u>E</u>infügen</a>
            <a href="#">Be<u>r</u>echnung</a>
            <a href="#">Er<u>g</u>ebnisse</a>
            <a href="#">E<u>x</u>tras</a>
            <a href="#"><u>T</u>abelle</a>
            <a href="#"><u>O</u>ptionen</a>
            <a href="#"><u>Z</u>usatzmodule</a>
            <a href="#"><u>F</u>enster</a>
            <a href="#"><u>H</u>ilfe</a>
            <div class="mdi-buttons">
                <button aria-label="Fenster minimieren"><svg viewBox="0 0 10 10"><path d="M1 8h7" stroke="#777" stroke-width="2"/></svg></button>
                <button aria-label="Fenster wiederherstellen"><svg viewBox="0 0 10 10"><path d="M2.500 3V1.500h7v5H8M.5 4h7v5.500h-7z" fill="none" stroke="#777"/></svg></button>
                <button aria-label="Fenster schließen"><svg viewBox="0 0 10 10"><path d="M1 1l8 8M9 1L1 9" stroke="#777" stroke-width="1.600"/></svg></button>
            </div>
        </nav>

        <div class="toolbars">
            <div class="toolbar">
                <span class="grip"></span>
                <button class="tb" aria-label="Neu"><svg class="ic"><use href="#i-new"/></svg></button>
                <button class="tb" aria-label="Öffnen"><svg class="ic"><use href="#i-open"/></svg></button>
                <button class="tb" aria-label="Projektmanager"><svg class="ic"><use href="#i-cab"/></svg></button>
                <button class="tb" aria-label="Blockmanager"><svg class="ic"><use href="#i-cabblue"/></svg></button>
                <button class="tb" aria-label="Speichern"><svg class="ic"><use href="#i-save"/></svg></button>
                <button class="tb" aria-label="Ausdruckprotokoll"><svg class="ic"><use href="#i-list"/></svg></button>
                <button class="tb" aria-label="Drucken"><svg class="ic"><use href="#i-print"/></svg></button>
                <button class="tb" aria-label="Vorschau"><svg class="ic"><use href="#i-preview"/></svg></button>
                <span class="sep"></span>
                <button class="tb" aria-label="Rückgängig"><svg class="ic"><use href="#i-undo"/></svg></button>
                <button class="tb" aria-label="Wiederherstellen"><svg class="ic"><use href="#i-redo"/></svg></button>
                <span class="sep"></span>
                <button class="tb" aria-label="Ebene wählen"><svg class="ic"><use href="#i-plane"/></svg></button>
                <button class="tb" aria-label="Ellipse wählen"><svg class="ic"><use href="#i-lasso"/></svg></button>
                <button class="tb" aria-label="Kreisring wählen"><svg class="ic"><use href="#i-ring"/></svg></button>
                <button class="tb" aria-label="Auswahl ändern"><svg class="ic"><use href="#i-selpm"/></svg></button>
                <button class="tb" aria-label="Sichtbarkeit"><svg class="ic"><use href="#i-group"/></svg></button>
                <span class="sep"></span>
                <button class="tb on" aria-label="Navigator"><svg class="ic"><use href="#i-sheet"/></svg></button>
                <button class="tb" aria-label="Tabelle"><svg class="ic"><use href="#i-table"/></svg></button>
                <span class="sep"></span>
                <button class="tb" aria-label="Neuer Lastfall"><svg class="ic"><use href="#i-newlf"/></svg></button>
                <select class="loadcase" aria-label="Lastfall"><option>LF1</option></select>
                <button class="tb" aria-label="Vorheriger"><svg class="ic"><use href="#i-prev"/></svg></button>
                <button class="tb" aria-label="Nächster"><svg class="ic"><use href="#i-next"/></svg></button>
                <button class="tb on" aria-label="Lasten anzeigen"><svg class="ic"><use href="#i-eyeload"/></svg></button>
                <button class="tb on" aria-label="Lastwerte"><svg class="ic"><use href="#i-xxload"/></svg></button>
                <button class="tb on" aria-label="Ergebnisse anzeigen"><svg class="ic"><use href="#i-eyeres"/></svg></button>
                <button class="tb on" aria-label="Ergebniswerte"><svg class="ic"><use href="#i-xxres"/></svg></button>
                <span class="sep"></span>
                <button class="tb" aria-label="Prüfen"><svg class="ic"><use href="#i-glasses"/></svg></button>
                <button class="tb" aria-label="Berechnungsparameter"><svg class="ic"><use href="#i-abacus2"/></svg></button>
                <button class="tb" aria-label="Berechnen"><svg class="ic"><use href="#i-abacus"/></svg></button>
            </div>
            <div class="toolbar">
                <span class="grip"></span>
                <button class="tb" aria-label="Raster"><svg class="ic"><use href="#i-gridhand"/></svg></button>
                <button class="tb" aria-label="Fang"><svg class="ic"><use href="#i-gridsnap"/></svg></button>
                <button class="tb on" aria-label="Arbeitsebene XY"><svg class="ic"><use href="#i-wp1"/></svg></button>
                <button class="tb" aria-label="Arbeitsebene YZ"><svg class="ic"><use href="#i-wp2"/></svg></button>
                <button class="tb" aria-label="Arbeitsebene XZ"><svg class="ic"><use href="#i-wp3"/></svg></button>
                <button class="tb" aria-label="FE-Netz"><svg class="ic"><use href="#i-mesh"/></svg></button>
                <button class="tb" aria-label="Einstellungen"><svg class="ic"><use href="#i-wrench"/></svg></button>
                <span class="sep"></span>
                <button class="tb" aria-label="Verschieben"><svg class="ic"><use href="#i-move"/></svg></button>
                <button class="tb" aria-label="Drehen"><svg class="ic"><use href="#i-rotate"/></svg></button>
                <button class="tb" aria-label="Spiegeln"><svg class="ic"><use href="#i-mirror"/></svg></button>
                <button class="tb" aria-label="Verbinden"><svg class="ic"><use href="#i-cross"/></svg></button>
                <button class="tb" aria-label="Info"><svg class="ic"><use href="#i-info"/></svg></button>
                <button class="tb" aria-label="Generieren"><svg class="ic"><use href="#i-calc"/></svg></button>
                <button class="tb" aria-label="Zusatzmodule"><svg class="ic"><use href="#i-gears"/></svg></button>
            </div>
            <div class="toolbar">
                <span class="grip"></span>
                <button class="tb" aria-label="Import"><svg class="ic"><use href="#i-mod1"/></svg></button>
                <button class="tb" aria-label="Export"><svg class="ic"><use href="#i-mod2"/></svg></button>
                <button class="tb" aria-label="CAD-Import"><svg class="ic"><use href="#i-acad1"/></svg></button>
                <button class="tb" aria-label="CAD-Export"><svg class="ic"><use href="#i-acad2"/></svg></button>
            </div>
        </div>

        <div class="toolbars">
            <div class="toolbar">
                <span class="grip"></span>
                <button class="tb split" aria-label="Knoten"><svg class="ic"><use href="#i-node"/></svg></button>
                <button class="tb" aria-label="Linie"><svg class="ic"><use href="#i-line"/></svg></button>
                <button class="tb split" aria-label="Stab"><svg class="ic"><use href="#i-member"/></svg></button>
                <button class="tb split" aria-label="Bogen"><svg class="ic"><use href="#i-clock"/></svg></button>
                <span class="sep"></span>
                <button class="tb" aria-label="Knotenlager"><svg class="ic"><use href="#i-supp"/></svg></button>
                <button class="tb" aria-label="Linienlager"><svg class="ic"><use href="#i-lsupp"/></svg></button>
                <button class="tb" aria-label="Flächenlager"><svg class="ic"><use href="#i-ssupp"/></svg></button>
                <span class="sep"></span>
                <button class="tb split" aria-label="Bemaßung"><svg class="ic"><use href="#i-dim"/></svg></button>
                <button class="tb" aria-label="Kommentar"><svg class="ic"><use href="#i-comment"/></svg></button>
                <button class="tb" aria-label="Hilfslinien"><svg class="ic"><use href="#i-guide"/></svg></button>
                <span class="sep"></span>
                <button class="tb split" aria-label="Fläche"><svg class="ic"><use href="#i-surf"/></svg></button>
                <button class="tb split" aria-label="Öffnung"><svg class="ic"><use href="#i-hole"/></svg></button>
                <button class="tb split" aria-label="Volumen"><svg class="ic"><use href="#i-solid"/></svg></button>
                <button class="tb" aria-label="Körper"><svg class="ic"><use href="#i-box"/></svg></button>
                <button class="tb split" aria-label="Kopie"><svg class="ic"><use href="#i-copybox"/></svg></button>
                <span class="sep"></span>
                <button class="tb split" aria-label="Kombination"><svg class="ic"><use href="#i-combo"/></svg></button>
                <button class="tb" aria-label="Knotenlast"><svg class="ic"><use href="#i-nload"/></svg></button>
                <button class="tb" aria-label="Stablast"><svg class="ic"><use href="#i-mload"/></svg></button>
                <button class="tb" aria-label="Linienlast"><svg class="ic"><use href="#i-mload"/></svg></button>
                <button class="tb" aria-label="Flächenlast"><svg class="ic"><use href="#i-sload"/></svg></button>
                <button class="tb split" aria-label="Lastgenerierung"><svg class="ic"><use href="#i-gload"/></svg></button>
            </div>
            <div class="toolbar">
                <span class="grip"></span>
                <button class="tb" aria-label="Verschieben"><svg class="ic"><use href="#i-hand"/></svg></button>
                <button class="tb" aria-label="Zoom Fenster"><svg class="ic"><use href="#i-zoomwin"/></svg></button>
                <button class="tb" aria-label="Zoom alles"><svg class="ic"><use href="#i-zoomx"/></svg></button>
                <button class="tb" aria-label="Isometrie"><svg class="ic"><use href="#i-cube"/></svg></button>
                <button class="tb" aria-label="Vorherige Ansicht"><svg class="ic"><use href="#i-cubes"/></svg></button>
                <span class="sep"></span>
                <button class="tb" aria-label="Ansicht X"><svg class="ic"><use href="#i-vx"/></svg></button>
                <button class="tb" aria-label="Ansicht Y"><svg class="ic"><use href="#i-vy"/></svg></button>
                <button class="tb" aria-label="Ansicht Z"><svg class="ic"><use href="#i-vz"/></svg></button>
                <button class="tb split" aria-label="Ansicht -Y"><svg class="ic"><use href="#i-vmy"/></svg></button>
                <button class="tb split" aria-label="Ansichten"><svg class="ic"><use href="#i-micro"/></svg></button>
                <span class="sep"></span>
                <button class="tb split" aria-label="Darstellung"><svg class="ic"><use href="#i-profile"/></svg></button>
            </div>
            <div class="toolbar">
                <span class="grip"></span>
                <button class="tb" aria-label="Verformung"><svg class="ic"><use href="#i-frame"/></svg></button>
                <button class="tb" aria-label="Rohr"><svg class="ic"><use href="#i-tube"/></svg></button>
                <span class="sep"></span>
                <button class="tb on" aria-label="Stabergebnisse"><svg class="ic"><use href="#i-rmember"/></svg></button>
                <button class="tb" aria-label="Flächenergebnisse"><svg class="ic"><use href="#i-rsurf"/></svg></button>
                <button class="tb" aria-label="Volumenergebnisse"><svg class="ic"><use href="#i-rsolid"/></svg></button>
                <button class="tb on" aria-label="Lagerreaktionen"><svg class="ic"><use href="#i-rsupp"/></svg></button>
                <button class="tb" aria-label="Schnitte"><svg class="ic"><use href="#i-section"/></svg></button>
                <button class="tb split" aria-label="Fenster"><svg class="ic"><use href="#i-windows"/></svg></button>
                <button class="tb" aria-label="Verlauf"><svg class="ic"><use href="#i-wave"/></svg></button>
                <button class="tb" aria-label="Werte"><svg class="ic"><use href="#i-values"/></svg></button>
                <span class="sep"></span>
                <button class="tb on" aria-label="Panel"><svg class="ic"><use href="#i-panel"/></svg></button>
                <button class="tb split" aria-label="Schnitt neu"><svg class="ic"><use href="#i-newsec"/></svg></button>
                <button class="tb split" aria-label="Farben"><svg class="ic"><use href="#i-colors"/></svg></button>
            </div>
        </div>

        <main class="workspace">
            <aside class="navigator">
                <div class="pane-head">
                    <h2>Projekt-Navigator - Ergebnisse</h2>
                    <button aria-label="Anheften"><svg><use href="#n-pin"/></svg></button>
                    <button aria-label="Schließen"><svg><use href="#n-x"/></svg></button>
                </div>
                <div class="scroll-area">
                    <ul class="tree">
                        <li>
                            <ul>
                                <li><div class="row"><label><input type="radio" name="verf"><svg class="ic"><use href="#t-frame"/></svg><span>u<sub>Z</sub></span></label></div></li>
                                <li><div class="row"><label><input type="radio" name="verf"><svg class="ic"><use href="#t-frame"/></svg><span>φ<sub>X</sub></span></label></div></li>
                                <li><div class="row"><label><input type="radio" name="verf"><svg class="ic"><use href="#t-frame"/></svg><span>φ<sub>Y</sub></span></label></div></li>
                                <li><div class="row"><label><input type="radio" name="verf"><svg class="ic"><use href="#t-frame"/></svg><span>φ<sub>Z</sub></span></label></div></li>
                            </ul>
                        </li>
                        <li>
                            <div class="row"><button class="toggle" aria-label="Zuklappen"></button><label><input type="checkbox" checked><svg class="ic"><use href="#t-mem"/></svg><span>Stäbe</span></label></div>
                            <ul>
                                <li>
                                    <div class="row"><button class="toggle" aria-label="Zuklappen"></button><label><input type="checkbox" class="mixed"><svg class="ic"><use href="#t-mem"/></svg><span>Lokale Verformungen</span></label></div>
                                    <ul>
                                        <li><div class="row"><label><input type="radio" name="stab"><svg class="ic"><use href="#t-mem"/></svg><span>u<sub>x</sub></span></label></div></li>
                                        <li><div class="row"><label><input type="radio" name="stab"><svg class="ic"><use href="#t-mem"/></svg><span>u<sub>y</sub></span></label></div></li>
                                        <li><div class="row"><label><input type="radio" name="stab"><svg class="ic"><use href="#t-mem"/></svg><span>u<sub>z</sub></span></label></div></li>
                                        <li><div class="row"><label><input type="radio" name="stab"><svg class="ic"><use href="#t-mem"/></svg><span>φ<sub>x</sub></span></label></div></li>
                                        <li><div class="row"><label><input type="radio" name="stab"><svg class="ic"><use href="#t-mem"/></svg><span>φ<sub>y</sub></span></label></div></li>
                                        <li><div class="row"><label><input type="radio" name="stab"><svg class="ic"><use href="#t-mem"/></svg><span>φ<sub>z</sub></span></label></div></li>
                                    </ul>
                                </li>
                                <li>
                                    <div class="row"><button class="toggle" aria-label="Zuklappen"></button><label><input type="checkbox" class="mixed"><svg class="ic"><use href="#t-mem"/></svg><span>Schnittgrößen</span></label></div>
                                    <ul>
                                        <li><div class="row"><label><input type="radio" name="stab"><svg class="ic"><use href="#t-n"/><text x="5" y="15">N</text></svg><span>N</span></label></div></li>
                                        <li><div class="row"><label><input type="radio" name="stab"><svg class="ic"><use href="#t-v"/><text x="4" y="15">Vy</text></svg><span>V<sub>y</sub></span></label></div></li>
                                        <li><div class="row"><label><input type="radio" name="stab"><svg class="ic"><use href="#t-v"/><text x="4" y="15">Vz</text></svg><span>V<sub>z</sub></span></label></div></li>
                                        <li><div class="row"><label><input type="radio" name="stab"><svg class="ic"><use href="#t-v"/><text x="2" y="15">Mт</text></svg><span>M<sub>T</sub></span></label></div></li>
                                        <li><div class="row"><label><input type="radio" name="stab"><svg class="ic"><use href="#t-v"/><text x="2" y="15">My</text></svg><span>M<sub>y</sub></span></label></div></li>
                                        <li><div class="row"><label><input type="radio" name="stab"><svg class="ic"><use href="#t-v"/><text x="2" y="15">Mz</text></svg><span>M<sub>z</sub></span></label></div></li>
                                    </ul>
                                </li>
                                <li>
                                    <div class="row"><button class="toggle" aria-label="Zuklappen"></button><label><input type="checkbox" class="mixed"><svg class="ic"><use href="#t-mem"/></svg><span>Spannungen</span></label></div>
                                    <ul>
                                        <li><div class="row"><label><input type="radio" name="stab"><svg class="ic"><use href="#t-mem"/></svg><span>σ<sub>x</sub></span></label></div></li>
                                        <li><div class="row"><label><input type="radio" name="stab"><svg class="ic"><use href="#t-mem"/></svg><span>τ<sub>y</sub></span></label></div></li>
                                        <li><div class="row"><label><input type="radio" name="stab"><svg class="ic"><use href="#t-mem"/></svg><span>τ<sub>z</sub></span></label></div></li>
                                        <li><div class="row"><button class="toggle plus" aria-label="Aufklappen"></button><label><input type="checkbox" class="mixed"><svg class="ic"><use href="#t-mem"/></svg><span>Elastische Spannungskomponente</span></label></div></li>
                                        <li><div class="row"><button class="toggle plus" aria-label="Aufklappen"></button><label><input type="checkbox" class="mixed"><svg class="ic"><use href="#t-mem"/></svg><span>Elastische Vergleichsspannungen</span></label></div></li>
                                    </ul>
                                </li>
                                <li>
                                    <div class="row"><button class="toggle" aria-label="Zuklappen"></button><label><input type="checkbox" class="mixed"><svg class="ic"><use href="#t-mem"/></svg><span>Verzerrungen</span></label></div>
                                    <ul>
                                        <li>
                                            <div class="row"><button class="toggle" aria-label="Zuklappen"></button><label><input type="checkbox" class="mixed"><svg class="ic"><use href="#t-mem"/></svg><span>Gesamtdehnung auf Querschnitt</span></label></div>
                                            <ul>
                                                <li><div class="row"><label><input type="radio" name="stab"><svg class="ic"><use href="#t-mem"/></svg><span>ε<sub>x,max</sub></span></label></div></li>
                                                <li><div class="row"><label><input type="radio" name="stab"><svg class="ic"><use href="#t-mem"/></svg><span>ε<sub>x,min</sub></span></label></div></li>
                                                <li><div class="row"><label><input type="radio" name="stab"><svg class="ic"><use href="#t-mem"/></svg><span>max|ε<sub>x</sub>|</span></label></div></li>
                                                <li><div class="row"><label><input type="radio" name="stab"><svg class="ic"><use href="#t-mem"/></svg><span>γ<sub>xy</sub></span></label></div></li>
                                                <li><div class="row"><label><input type="radio" name="stab"><svg class="ic"><use href="#t-mem"/></svg><span>γ<sub>xz</sub></span></label></div></li>
                                                <li><div class="row"><label><input type="radio" name="stab"><svg class="ic"><use href="#t-mem"/></svg><span>κ<sub>x</sub></span></label></div></li>
                                                <li><div class="row"><label><input type="radio" name="stab"><svg class="ic"><use href="#t-mem"/></svg><span>κ<sub>y</sub></span></label></div></li>
                                                <li><div class="row"><label><input type="radio" name="stab"><svg class="ic"><use href="#t-mem"/></svg><span>κ<sub>z</sub></span></label></div></li>
                                            </ul>
                                        </li>
                                    </ul>
                                </li>
                                <li>
                                    <div class="row"><button class="toggle" aria-label="Zuklappen"></button><label><input type="checkbox" class="mixed"><svg class="ic"><use href="#t-mem"/></svg><span>Kontaktkräfte</span></label></div>
                                    <ul>
                                        <li><div class="row"><label><input type="radio" name="stab"><svg class="ic"><use href="#t-mem"/></svg><span>p<sub>x</sub></span></label></div></li>
                                        <li><div class="row"><label><input type="radio" name="stab"><svg class="ic"><use href="#t-p"/><text x="4" y="13">py</text></svg><span>p<sub>y</sub></span></label></div></li>
                                        <li><div class="row"><label><input type="radio" name="stab" checked><svg class="ic"><use href="#t-p"/><text x="4" y="13">pz</text></svg><span>p<sub>z</sub></span></label></div></li>
                                        <li><div class="row"><label><input type="radio" name="stab"><svg class="ic"><use href="#t-mem"/></svg><span>m<sub>x</sub></span></label></div></li>
                                    </ul>
                                </li>
                            </ul>
                        </li>
                        <li><div class="row"><button class="toggle plus" aria-label="Aufklappen"></button><label><input type="checkbox"><svg class="ic"><use href="#t-frame"/></svg><span>Kriterien</span></label></div></li>
                        <li>
                            <div class="row"><button class="toggle" aria-label="Zuklappen"></button><label><input type="checkbox" checked><svg class="ic"><use href="#t-sup"/></svg><span>Lagerreaktionen</span></label></div>
                            <ul>
                                <li>
                                    <div class="row"><button class="toggle" aria-label="Zuklappen"></button><label><input type="checkbox" checked><svg class="ic"><use href="#t-sup"/></svg><span>Knotenlager</span></label></div>
                                    <ul>
                                        <li><div class="row"><label><input type="radio" name="lager" checked><svg class="ic"><use href="#t-sup"/></svg><span>Lokal</span></label></div></li>
                                        <li><div class="row"><label><input type="radio" name="lager"><svg class="ic"><use href="#t-sup"/></svg><span>Global</span></label></div></li>
                                        <li><div class="row"><label><input type="checkbox" checked><svg class="ic"><use href="#t-sup"/></svg><span>P<sub>x'</sub></span></label></div></li>
                                        <li><div class="row"><label><input type="checkbox" checked><svg class="ic"><use href="#t-sup"/></svg><span>P<sub>y'</sub></span></label></div></li>
                                        <li><div class="row"><label><input type="checkbox" checked><svg class="ic"><use href="#t-sup"/></svg><span>P<sub>z'</sub></span></label></div></li>
                                        <li><div class="row"><label><input type="checkbox"><svg class="ic"><use href="#t-sup"/></svg><span>M<sub>x'</sub></span></label></div></li>
                                        <li><div class="row"><label><input type="checkbox"><svg class="ic"><use href="#t-sup"/></svg><span>M<sub>y'</sub></span></label></div></li>
                                        <li><div class="row"><label><input type="checkbox"><svg class="ic"><use href="#t-sup"/></svg><span>M<sub>z'</sub></span></label></div></li>
                                    </ul>
                                </li>
                                <li>
                                    <div class="row"><button class="toggle" aria-label="Zuklappen"></button><label><input type="checkbox"><svg class="ic"><use href="#t-sup"/></svg><span>Resultierende</span></label></div>
                                    <ul>
                                        <li><div class="row"><label><input type="radio" name="result" checked><svg class="ic"><use href="#t-sup"/></svg><span>P</span></label></div></li>
                                        <li><div class="row"><button class="toggle plus" aria-label="Aufklappen"></button><label><input type="radio" name="result"><svg class="ic"><use href="#t-sup"/></svg><span>Komponenten</span></label></div></li>
                                    </ul>
                                </li>
                            </ul>
                        </li>
                        <li><div class="row"><button class="toggle plus" aria-label="Aufklappen"></button><label><input type="checkbox"><svg class="ic"><use href="#t-frame"/></svg><span>Lastverteilung</span></label></div></li>
                    </ul>
                    <div class="vscroll">
                        <button aria-label="Nach oben"><svg viewBox="0 0 10 10"><path d="M1 7l4-4 4 4"/></svg></button>
                        <span class="thumb"></span>
                        <button aria-label="Nach unten"><svg viewBox="0 0 10 10"><path d="M1 3l4 4 4-4"/></svg></button>
                    </div>
                    <div class="hscroll">
                        <button aria-label="Nach links"><svg viewBox="0 0 10 10"><path d="M7 1L3 5l4 4"/></svg></button>
                        <span class="thumb"></span>
                        <button aria-label="Nach rechts"><svg viewBox="0 0 10 10"><path d="M3 1l4 4-4 4"/></svg></button>
                    </div>
                </div>
                <div class="nav-tabs">
                    <button><svg class="ic"><use href="#n-data"/></svg>Daten</button>
                    <button><svg class="ic"><use href="#n-show"/></svg>Zeigen</button>
                    <button><svg class="ic"><use href="#n-view"/></svg>Ansichten</button>
                    <button class="active"><svg class="ic"><use href="#n-res"/></svg>Ergebnisse</button>
                </div>
            </aside>

            <section class="viewport">
                <div class="legend-text">Kontaktkräfte p-z [kN/m]<br>Lagerreaktionen [kN]<br>LF1<br>Belastung [kN/m]</div>
                <div class="legend-text">Max p-z: 10.000, Min p-z: 0.000 kN/m<br>Max P-X': 0.00, Min P-X': 0.00 kN<br>Max P-Y': 0.00, Min P-Y': 0.00 kN<br>Max P-Z': 25.00, Min P-Z': 25.00 kN</div>
                <svg class="model" viewBox="307 109 1128 1067">
                    <defs>
                        <g id="down"><path d="M-3 598h6l-3 6z" fill="#00007f"/></g>
                        <g id="spring" fill="none" stroke="#00f000">
                            <path d="M0 5v2l-5 4 4 2 2 1v6M-5 21h10" />
                            <path d="M-3-7Q0-16 10-16q7 1 9 7M14-9q3 0 7-4" stroke-dasharray="9 1"/>
                            <path d="M7-4l6 9 4-9v7M21-4v9" stroke="#50a0b0" opacity=".5"/>
                        </g>
                        <rect id="node" x="-4.500" y="-4.500" width="9" height="9" fill="none" stroke="#20f070" stroke-width="1.500"/>
                    </defs>
                    <!-- bedded beam -->
                    <rect x="363" y="503" width="421" height="101" fill="#b2b2d9"/>
                    <path d="M363.500 503.500h420v101h-420zM447.500 503v101M531.500 503v101" fill="none" stroke="#5a5aa0"/>
                    <path d="M615.500 503v101M699.500 503v101" stroke="#00007f"/>
                    <use href="#down" x="363.500"/><use href="#down" x="447.500"/><use href="#down" x="531.500"/><use href="#down" x="615.500"/><use href="#down" x="699.500"/><use href="#down" x="783.500"/>
                    <circle cx="573.500" cy="503.500" r="2" fill="#00007f"/>
                    <rect x="363" y="613" width="421" height="17" fill="url(#g-beam2)"/>
                    <use href="#spring" x="405" y="621.500"/><use href="#spring" x="416" y="621.500"/><use href="#spring" x="468" y="621.500"/><use href="#spring" x="521" y="621.500"/><use href="#spring" x="573.500" y="621.500"/><use href="#spring" x="626" y="621.500"/><use href="#spring" x="679" y="621.500"/><use href="#spring" x="731" y="621.500"/><use href="#spring" x="742" y="621.500"/>
                    <path d="M363 621.500h421M363 672.500h421M447.500 621v51M489.500 621v51M531.500 621v51M573.500 621v51M615.500 621v51M657.500 621v51M699.500 621v51M741.500 621v51M783.500 621v51" stroke="#b80000" stroke-width="1.500" fill="none"/>
                    <path d="M363 621v52M405 621v51" stroke="#b80000" stroke-width="2"/>
                    <use href="#node" x="405" y="621.500"/><use href="#node" x="416" y="621.500"/><use href="#node" x="468" y="621.500"/><use href="#node" x="521" y="621.500"/><use href="#node" x="573.500" y="621.500"/><use href="#node" x="626" y="621.500"/><use href="#node" x="679" y="621.500"/><use href="#node" x="731" y="621.500"/><use href="#node" x="742" y="621.500"/>
                    <circle cx="363" cy="621.500" r="2" fill="#900"/><circle cx="784" cy="621.500" r="2" fill="#900"/>
                    <text x="575" y="497" class="navy">10.000</text>
                    <text x="573" y="686" class="red">10.000</text>

                    <!-- simply supported beam -->
                    <rect x="952" y="503" width="421" height="101" fill="#b2b2d9"/>
                    <path d="M952.500 503.500h420v101h-420zM1036.500 503v101M1120.500 503v101" fill="none" stroke="#5a5aa0"/>
                    <path d="M1204.500 503v101M1288.500 503v101" stroke="#00007f"/>
                    <use href="#down" x="952.500"/><use href="#down" x="1036.500"/><use href="#down" x="1120.500"/><use href="#down" x="1204.500"/><use href="#down" x="1288.500"/><use href="#down" x="1372.500"/>
                    <circle cx="1162.500" cy="503.500" r="2" fill="#00007f"/>
                    <rect x="952" y="613" width="421" height="17" fill="url(#g-beam)"/>
                    <path d="M952 621l5 8h-10zM1372.500 621l5 8h-10z" fill="#80ff80"/>
                    <path d="M1366 632.500h13" stroke="#80ff80"/>
                    <circle cx="1372.500" cy="621.500" r="2" fill="#900"/>
                    <path d="M952 621.500h33" stroke="#f00020" stroke-width="2"/><path d="M983 618.500l10 3-10 3z" fill="#a00000"/>
                    <path d="M952 622v34" stroke="#0000f0" stroke-width="2"/><path d="M949 653h6l-3 9z" fill="#0000a0"/>
                    <rect x="950" y="619" width="4" height="5" fill="#00d000"/>
                    <path d="M952 781V684M1372.500 781V684" stroke="#0f0" stroke-width="2"/>
                    <path d="M952 681l4 7h-8zM1372.500 681l4 7h-8z" fill="#0f0"/>
                    <text x="1164" y="497" class="navy">10.000</text>
                    <text x="969.500" y="734" class="green">25.00</text>
                    <text x="1390.500" y="734" class="green">25.00</text>
                    <text x="1002" y="625" class="axis-x">X</text>
                    <text x="952" y="675" class="axis-z">Z</text>

                    <!-- global axes -->
                    <path d="M362 1030h33" stroke="#f00" stroke-width="2"/><path d="M393 1027l10 3-10 3z" fill="#a00000"/>
                    <path d="M362 1030v34" stroke="#00f" stroke-width="2"/><path d="M359 1061h6l-3 9z" fill="#0000a0"/>
                    <rect x="360" y="1028" width="5" height="4" fill="#00c000"/>
                    <text x="412" y="1034" class="axis-x">X</text>
                    <text x="362" y="1084" class="axis-z">Z</text>
                </svg>
            </section>

            <aside class="panel">
                <div class="pane-head active">
                    <h2>Panel</h2>
                    <button aria-label="Anheften"><svg><use href="#n-pin"/></svg></button>
                    <button aria-label="Schließen"><svg><use href="#n-x"/></svg></button>
                </div>
                <div class="panel-body">
                    <p>Kontaktkräfte<br>p<sub>z</sub> [kN/m]</p>
                    <div class="scale">
                        <ul class="colors">
                            <li class="c10"></li><li class="c9"></li><li class="c8"></li><li class="c7"></li><li class="c6"></li><li class="c5"></li><li class="c4"></li><li class="c3"></li><li class="c2"></li><li class="c1"></li><li class="c0"></li>
                        </ul>
                        <ol class="values">
                            <li>10.000</li><li>9.091</li><li>8.182</li><li>7.273</li><li>6.364</li><li>5.455</li><li>4.545</li><li>3.636</li><li>2.727</li><li>1.818</li><li>0.909</li><li>0.000</li>
                        </ol>
                    </div>
                    <dl class="extremes">
                        <dt>Max</dt><dd>:</dd><dd>10.000</dd>
                        <dt>Min</dt><dd>:</dd><dd>0.000</dd>
                    </dl>
                    <button class="find" aria-label="Suchen"><svg class="ic"><use href="#n-find"/></svg></button>
                </div>
                <div class="panel-tabs">
                    <button class="active" aria-label="Farbskala"><svg class="ic"><use href="#n-legend"/></svg></button>
                    <button aria-label="Faktoren"><svg class="ic"><use href="#n-scale"/></svg></button>
                    <button aria-label="Filter"><svg class="ic"><use href="#n-micro"/></svg></button>
                </div>
            </aside>
        </main>

        <footer class="statusbar">
            <button>FANG</button>
            <button class="up">RASTER</button>
            <button>KARTES</button>
            <button>OFANG</button>
            <button>HLINIEN</button>
            <button>DXF</button>
            <div class="fields"><span></span><span></span><span></span><span></span></div>
        </footer>

        <!-- callout arrows -->
        <svg class="callouts" width="1600" height="1200" viewBox="0 0 1600 1200" aria-hidden="true">
            <path d="M173 765L328 681" stroke-width="10" stroke-linecap="round"/>
            <path d="M352 667L334 694 320 669z"/>
            <path d="M162 893L880 735" stroke-width="10" stroke-linecap="round"/>
            <path d="M905 729L880 750 874 722z"/>
        </svg>
    </div>
</body>
</html>
```
FILE: styles.css
```css
* {
    box-sizing: border-box;
}

body {
    margin: 0;
    font-family: Lato, "Open Sans", sans-serif;
    font-size: 12px;
    color: #000;
    background-color: #cfd3dd;
}

button {
    margin: 0;
    padding: 0;
    border: 0;
    background: none;
    font: inherit;
    color: inherit;
    cursor: pointer;
}

h1, h2 {
    margin: 0;
    font-size: inherit;
    font-weight: normal;
}

ul, ol, dl, dd, p {
    margin: 0;
    padding: 0;
    list-style: none;
}

.sprite {
    position: absolute;
    width: 0;
    height: 0;
}

.ic {
    display: block;
    flex: none;
    width: 16px;
    height: 16px;
    overflow: visible;
}

.app {
    position: relative;
    display: flex;
    flex-direction: column;
    height: 100vh;
    border: 1px solid #6b6b6b;
    overflow: hidden;
}

/* title + menu */
.titlebar {
    flex: none;
    display: flex;
    align-items: center;
    gap: 5px;
    height: 30px;
    padding: 0 0 2px 8px;
    background-color: #fff;
}

.titlebar h1 {
    font-size: 11px;
}

.window-buttons {
    display: flex;
    margin-left: auto;
}

.window-buttons button {
    display: flex;
    align-items: center;
    justify-content: center;
    width: 46px;
    height: 28px;
}

.window-buttons svg {
    width: 10px;
    height: 10px;
}

.menubar {
    flex: none;
    display: flex;
    align-items: center;
    gap: 14px;
    height: 24px;
    padding-bottom: 2px;
    color: #4a505c;
}

.menubar a {
    color: inherit;
    text-decoration: none;
}

.menubar .grip {
    margin-right: -14px;
}

.menubar .bridge {
    height: 13px;
    margin-right: -5px;
}

.mdi-buttons {
    display: flex;
    gap: 6px;
    margin-left: auto;
    padding: 3px 4px 0 0;
}

.mdi-buttons svg {
    display: block;
    width: 10px;
    height: 10px;
}

/* toolbars */
.toolbars {
    flex: none;
    display: flex;
    gap: 1px;
    height: 26px;
}

.toolbar {
    display: flex;
    align-items: center;
    height: 26px;
    padding: 1px 1px 0 0;
    border-radius: 0 3px 3px 0;
    border-bottom: 1px solid #a3a9b8;
    background: linear-gradient(#eef0f6, #d8dce6);
}

.toolbar,
.toolbar + .toolbar {
    margin-left: -1px;
}

.grip {
    flex: none;
    width: 11px;
    height: 16px;
    background: repeating-linear-gradient(#a2a8b4 0 2px, transparent 2px 4px) 5px 0 / 2px 100% no-repeat;
}

.tb {
    display: flex;
    align-items: center;
    justify-content: center;
    flex: none;
    width: 22px;
    height: 22px;
}

.tb.on {
    border: 1px solid #b5975a;
    border-radius: 2px;
    background: linear-gradient(#fcd9a0, #f9b455 50%, #fde79a);
}

.tb.split {
    gap: 5px;
    width: 35px;
}

.tb.split::after {
    content: "";
    border: 3px solid transparent;
    border-top: 4px solid #7b8190;
    border-bottom: 0;
}

.sep {
    flex: none;
    width: 8px;
    height: 14px;
    background: linear-gradient(#a9aebb, #a9aebb) 3px 0 / 1px 100% no-repeat;
}

.loadcase {
    flex: none;
    appearance: none;
    width: 427px;
    height: 19px;
    margin: 0 2px;
    padding: 0 4px;
    border: 1px solid #fff;
    border-radius: 0;
    background:
        conic-gradient(from -45deg at 50% 100%, #7b8190 90deg, transparent 0) right 4px center / 6px 0 no-repeat,
        linear-gradient(45deg, transparent 50%, #7b8190 50%) right 7px center / 3px 3px no-repeat,
        linear-gradient(-45deg, transparent 50%, #7b8190 50%) right 4px center / 3px 3px no-repeat,
        linear-gradient(#d8dce6, #d8dce6) right / 14px 100% no-repeat,
        #fff;
    font: inherit;
    font-size: 11px;
    color: #000;
}

/* workspace */
.workspace {
    flex: 1;
    min-height: 0;
    display: grid;
    grid-template-columns: 300px 1fr 158px;
    gap: 5px;
    background-color: #cfd3dd;
}

.navigator,
.panel {
    display: flex;
    flex-direction: column;
    min-height: 0;
}

.pane-head {
    flex: none;
    display: flex;
    align-items: center;
    gap: 7px;
    height: 21px;
    padding: 0 5px 0 4px;
    border-bottom: 1px solid #b6bcc9;
    background-color: #e8edf6;
    color: #454b57;
}

.pane-head.active {
    background-color: #b9bfca;
}

.pane-head h2 {
    flex: 1;
}

.pane-head svg {
    display: block;
    width: 10px;
    height: 10px;
}

.scroll-area {
    flex: 1;
    min-height: 0;
    display: grid;
    grid-template-columns: 1fr 15px;
    grid-template-rows: 1fr 16px;
    padding: 2px 4px 1px 3px;
    border-bottom: 1px solid #8b909b;
    background-color: #e8edf6;
}

.tree {
    min-width: 0;
    overflow: hidden;
    background-color: #fcfcf4;
}

.tree ul {
    margin-left: 19px;
}

.tree li {
    position: relative;
}

/* dotted connector lines */
.tree li::before {
    content: "";
    position: absolute;
    top: 0;
    bottom: 0;
    left: 11px;
    border-left: 1px dotted #808080;
}

.tree li:last-child::before {
    bottom: auto;
    height: 10px;
}

.row {
    position: relative;
    display: grid;
    grid-template-columns: 24px 1fr;
    align-items: center;
    height: 18px;
    white-space: nowrap;
}

.row::before {
    content: "";
    position: absolute;
    top: 10px;
    left: 12px;
    width: 11px;
    border-top: 1px dotted #808080;
}

.row label {
    grid-column: 2;
    display: flex;
    align-items: center;
    line-height: 17px;
}

.row sub {
    font-size: 11px;
    line-height: 1;
    vertical-align: -2px;
}

.row .ic {
    margin: 0 5px 0 2px;
}

.row text {
    font: bold 8px "Liberation Sans", sans-serif;
    fill: #222;
}

.row input {
    appearance: none;
    flex: none;
    width: 13px;
    height: 13px;
    margin: 0;
    border: 1px solid #3b3b44;
    background: linear-gradient(135deg, #d3d7e0, #fff);
}

.row input[type="radio"] {
    border-radius: 50%;
    background: radial-gradient(circle at 60% 60%, #fff 40%, #b9bfcc);
}

.row input[type="radio"]:checked {
    background: radial-gradient(circle, #111 0 2px, #fff 3px);
}

.row input[type="checkbox"]:checked {
    background: url("data:image/svg+xml,%3Csvg xmlns='http://www.w3.org/2000/svg' viewBox='0 0 11 11'%3E%3Cpath d='M2 5l2.500 3L9 3' fill='none' stroke='%23000' stroke-width='2'/%3E%3C/svg%3E"), linear-gradient(135deg, #dfe2ea, #fff);
}

.row input.mixed {
    background: linear-gradient(#959595, #959595) center / 7px 7px no-repeat, #e4e6ea;
}

.toggle {
    position: relative;
    width: 9px;
    height: 9px;
    margin: 2px 0 0 7px;
    border: 1px solid #8c8c8c;
    border-radius: 1px;
    background: linear-gradient(#3c5a9c, #3c5a9c) center / 5px 1px no-repeat, #f6f6f6;
}

.toggle.plus {
    background: linear-gradient(#3c5a9c, #3c5a9c) center / 5px 1px no-repeat, linear-gradient(#3c5a9c, #3c5a9c) center / 1px 5px no-repeat, #f6f6f6;
}

.vscroll,
.hscroll {
    display: flex;
    background-color: #f0f0f0;
}

.vscroll {
    flex-direction: column;
}

.vscroll button,
.hscroll button {
    flex: none;
    display: flex;
    align-items: center;
    justify-content: center;
    width: 17px;
    height: 17px;
}

.vscroll button {
    width: 15px;
}

.hscroll button {
    height: 16px;
}

.vscroll svg,
.hscroll svg {
    width: 9px;
    height: 9px;
    fill: none;
    stroke: #505050;
    stroke-width: 2;
}

.thumb {
    flex: 1;
    background-color: #c2c2c2;
}

.vscroll .thumb {
    margin-top: 66px;
}

.hscroll .thumb {
    margin-right: 9px;
    background-color: #cdcdcd;
}

.nav-tabs {
    flex: none;
    display: flex;
    gap: 4px;
    height: 22px;
    padding-left: 3px;
    color: #4a505c;
}

.nav-tabs button {
    display: flex;
    align-items: center;
    gap: 2px;
    height: 20px;
    padding: 0 3px;
}

.nav-tabs .active {
    border: 1px solid #bfe6ee;
    border-top: 0;
    border-radius: 0 0 3px 3px;
    background-color: #f0f2f7;
}

/* model view */
.viewport {
    position: relative;
    display: flex;
    flex-direction: column;
    justify-content: space-between;
    min-width: 0;
    margin-top: 1px;
    padding: 5px 4px;
    border: 1px solid #e4e4e4;
    border-top-color: #6d6d6d;
    border-left-color: #6d6d6d;
    background-color: #fff;
}

.legend-text {
    font: 11px/14px "Liberation Sans", Arial, sans-serif;
}

.model {
    position: absolute;
    inset: 0;
    width: 100%;
    height: 100%;
    font-family: "Liberation Sans", Arial, sans-serif;
    font-size: 9px;
    text-anchor: middle;
}

.navy { fill: #00007f; }
.red { fill: #b80000; }
.green { fill: #00f000; }
.axis-x { fill: #f00; }
.axis-z { fill: #00f; }

.navy,
.red,
.green {
    stroke: currentColor;
    stroke-width: 0;
}

/* colour panel */
.panel-body {
    position: relative;
    flex: 1;
    padding: 4px 4px 0 5px;
    border: 1px solid #e1e6f0;
    border-bottom: 1px solid #8b909b;
    background-color: #efefef;
    font-family: "DejaVu Sans Condensed", "Liberation Sans", sans-serif;
    font-size: 11px;
}

.panel-body p {
    line-height: 16px;
}

.panel-body sub {
    font-size: 9px;
    line-height: 1;
    vertical-align: -1px;
}

.scale {
    display: flex;
    height: 215px;
    margin-top: 1px;
    padding: 2px 0 0 37px;
    border: 1px solid #fff;
    border-top-color: #9a9a9a;
    border-left-color: #9a9a9a;
    background-color: #fbf8f2;
}

.colors {
    width: 34px;
    padding-top: 8px;
}

.colors li {
    position: relative;
    width: 27px;
    height: 17px;
    border: 1px solid #000;
    border-bottom: 0;
}

.colors li::after {
    content: "";
    position: absolute;
    top: -1px;
    left: 25px;
    width: 7px;
    border-top: 1px solid #000;
}

.colors li:last-child {
    height: 18px;
    border-bottom: 1px solid #000;
}

.c10 { background-color: #b80000; }
.c9 { background-color: #ff0000; }
.c8 { background-color: #ffa800; }
.c7 { background-color: #d0d000; }
.c6 { background-color: #ffff00; }
.c5 { background-color: #00f800; }
.c4 { background-color: #00e48c; }
.c3 { background-color: #00f4f4; }
.c2 { background-color: #0098ff; }
.c1 { background-color: #0000ff; }
.c0 { background-color: #000090; }

.values {
    width: 37px;
    text-align: right;
    line-height: 17px;
}

.extremes {
    display: grid;
    grid-template-columns: 24px 6px 42px;
    margin-top: 10px;
    padding-left: 37px;
    border: 1px solid #a6a6e8;
    border-top-color: #dbe4f4;
    border-left-color: #dbe4f4;
    background-color: #f1f4fa;
    line-height: 17px;
}

.extremes dd {
    text-align: right;
}

.find {
    position: absolute;
    top: 433px;
    right: 3px;
    display: flex;
    align-items: center;
    justify-content: center;
    width: 24px;
    height: 23px;
    border: 1px solid #a9aebb;
    background-color: #e6e9f0;
}

.panel-tabs {
    flex: none;
    display: flex;
    gap: 6px;
    height: 22px;
    padding-left: 2px;
}

.panel-tabs button {
    display: flex;
    align-items: center;
    justify-content: center;
    width: 24px;
    height: 20px;
}

.panel-tabs .active {
    border: 1px solid #bfe6ee;
    border-top: 0;
    background-color: #f0f2f7;
}

/* status bar */
.statusbar {
    flex: none;
    display: flex;
    gap: 2px;
    height: 22px;
    padding: 1px 90px 1px 814px;
    border-top: 1px solid #a3a8b5;
    background: linear-gradient(#d9dce4, #c3c8d1 30%, #a9aeb8 45%, #b9bec7);
}

.statusbar button {
    padding: 0 3px 0 1px;
    border: 1px solid #f4f4f4;
    border-top: 2px solid #111;
    border-left: 2px solid #111;
    background-color: rgba(255, 255, 255, .2);
    font-size: 11px;
    color: #222630;
}

.statusbar .up {
    border: 1px solid #8d929c;
    border-top-color: #dde0e6;
    border-left-color: #dde0e6;
}

.fields {
    flex: 1;
    display: flex;
    justify-content: flex-end;
    border-left: 1px solid #8d929c;
}

.fields span {
    width: 74px;
    border-left: 1px solid #8d929c;
}

.fields span:first-child {
    width: 88px;
}

.fields span:last-child {
    width: 1px;
}

.callouts {
    position: absolute;
    top: -1px;
    left: -1px;
    fill: #e84a42;
    stroke: #e84a42;
    stroke-linejoin: round;
    filter: drop-shadow(2px 4px 2px rgba(0, 0, 0, .45));
    pointer-events: none;
}
```
